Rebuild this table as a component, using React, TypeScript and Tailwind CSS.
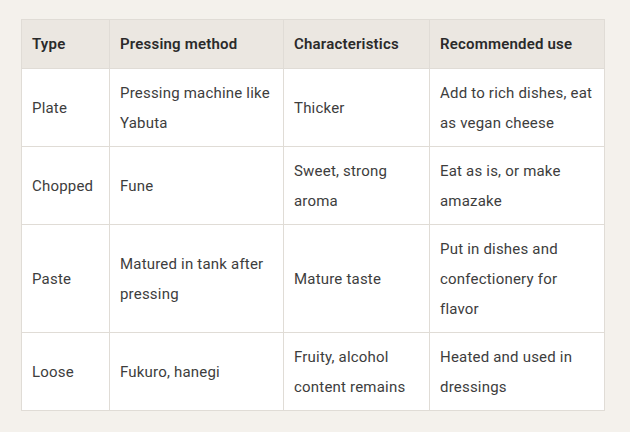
const rows = [
  ["Plate", "Pressing machine like Yabuta", "Thicker", "Add to rich dishes, eat as vegan cheese"],
  ["Chopped", "Fune", "Sweet, strong aroma", "Eat as is, or make amazake"],
  ["Paste", "Matured in tank after pressing", "Mature taste", "Put in dishes and confectionery for flavor"],
  ["Loose", "Fukuro, hanegi", "Fruity, alcohol content remains", "Heated and used in dressings"],
];

const widths = ["w-[88px]", "w-[174px]", "w-[146px]", "w-[175px]"];

function App() {
  return (
    <div className="w-[630px] h-[432px] bg-[#f4f1ec] pt-[19px] pl-[21px] font-['Roboto',sans-serif] text-[#3d3d3d]">
      <table className="border-collapse table-fixed w-[584px] text-[15px] tracking-[0.2px] leading-[30px]">
        <thead>
          <tr className="bg-[#ebe7e1]">
            {["Type", "Pressing method", "Characteristics", "Recommended use"].map((h, i) => (
              <th
                key={h}
                className={`${widths[i]} border border-[#e0dcd6] px-[10px] py-[9px] text-left font-semibold text-[#2a2a2a]`}
              >
                {h}
              </th>
            ))}
          </tr>
        </thead>
        <tbody className="bg-white">
          {rows.map((r) => (
            <tr key={r[0]}>
              {r.map((c, i) => (
                <td key={i} className="border border-[#e0dcd6] px-[10px] py-[8.5px] align-middle">
                  {c}
                </td>
              ))}
            </tr>
          ))}
        </tbody>
      </table>
    </div>
  );
}

export default App;
